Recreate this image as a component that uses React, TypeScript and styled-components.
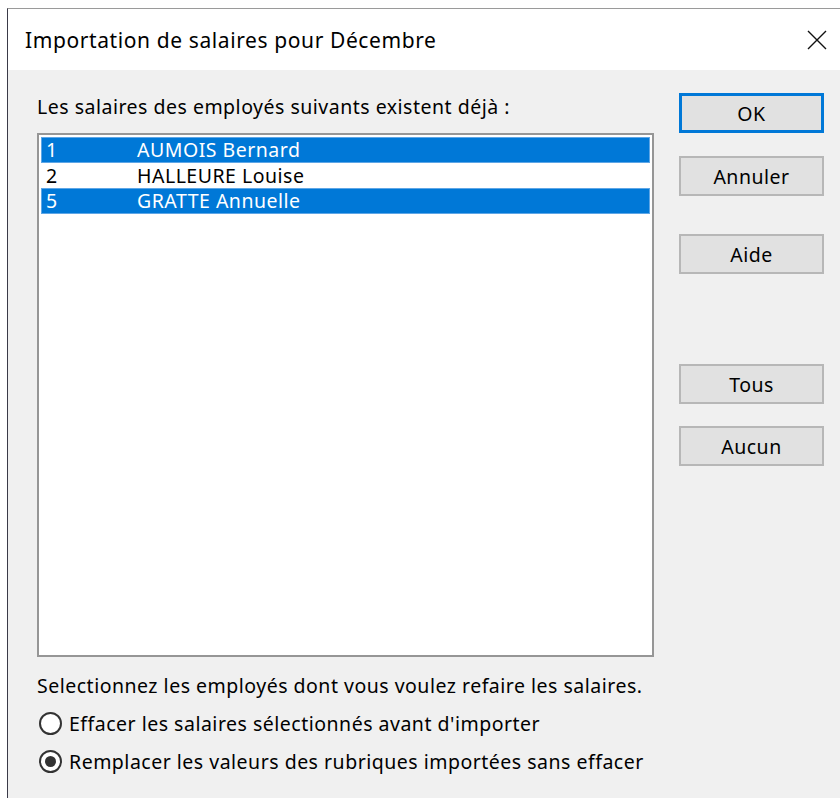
import React, { useState } from 'react';
import styled, { createGlobalStyle } from 'styled-components';

const GlobalStyle = createGlobalStyle`
  html, body {
    margin: 0;
    padding: 0;
    background: #ffffff;
  }
  body {
    font-family: "Noto Sans", "Open Sans", sans-serif;
    color: #000;
  }
  * {
    box-sizing: border-box;
  }
`;

const Desktop = styled.div`
  width: 840px;
  height: 798px;
  overflow: hidden;
  padding: 8px 0 0 7px;
  background: #ffffff;
`;

const Window = styled.div`
  height: 100%;
  border-left: 1px solid #3a3a48;
  border-top: 1px solid #9a9a9a;
  background: #f0f0f0;
  display: flex;
  flex-direction: column;
`;

const TitleBar = styled.div`
  height: 61px;
  flex: none;
  background: #ffffff;
  display: flex;
  align-items: center;
  justify-content: space-between;
  padding: 0 12px 0 17px;
`;

const Title = styled.span`
  font-size: 21px;
  letter-spacing: 0.6px;
  line-height: 26px;
`;

const CloseButton = styled.button`
  width: 22px;
  height: 22px;
  padding: 0;
  border: none;
  background: none;
  display: flex;
  align-items: center;
  justify-content: center;
  cursor: pointer;
`;

const Body = styled.div`
  flex: 1;
  display: grid;
  grid-template-columns: 617px 145px;
  column-gap: 25px;
  padding: 0 0 0 29px;
  font-size: 19.5px;
  letter-spacing: 0.5px;
`;

const Column = styled.div`
  display: flex;
  flex-direction: column;
`;

const Label = styled.div<{ top: number }>`
  margin-top: ${p => p.top}px;
  line-height: 24px;
  white-space: nowrap;
`;

const ListBox = styled.div`
  margin-top: 14px;
  height: 524px;
  border: 2px solid #969696;
  background: #ffffff;
  padding: 2px;
`;

const Row = styled.div<{ selected: boolean }>`
  height: 25.5px;
  display: flex;
  align-items: center;
  background: ${p => (p.selected ? '#0078d7' : 'transparent')};
  color: ${p => (p.selected ? '#ffffff' : '#000000')};
  box-shadow: ${p => (p.selected ? 'inset 0 0 0 1px #5ea6e6' : 'none')};
  cursor: default;
`;

const RowNumber = styled.span`
  width: 96px;
  padding-left: 5px;
`;

const RadioRow = styled.label<{ top: number }>`
  margin-top: ${p => p.top}px;
  display: flex;
  align-items: center;
  height: 26px;
  padding-left: 2px;
  white-space: nowrap;
  cursor: default;
`;

const RadioMark = styled.span<{ checked: boolean }>`
  flex: none;
  width: 23px;
  height: 23px;
  border-radius: 50%;
  border: 2px solid #333333;
  background: #ffffff;
  margin-right: 7px;
  display: flex;
  align-items: center;
  justify-content: center;

  &::after {
    content: '';
    width: 11px;
    height: 11px;
    border-radius: 50%;
    background: #333333;
    display: ${p => (p.checked ? 'block' : 'none')};
  }
`;

const Button = styled.button<{ top: number; isDefault?: boolean }>`
  margin-top: ${p => p.top}px;
  width: 145px;
  height: 40px;
  background: #e1e1e1;
  border: ${p => (p.isDefault ? '3px solid #0078d7' : '2px solid #b7b7b7')};
  font-family: inherit;
  font-size: 19.5px;
  letter-spacing: 0.5px;
  color: #000;
  padding: 0;
  cursor: default;
`;

const employees = [
  { id: 1, name: 'AUMOIS Bernard' },
  { id: 2, name: 'HALLEURE Louise' },
  { id: 5, name: 'GRATTE Annuelle' },
];

const options = [
  "Effacer les salaires sélectionnés avant d'importer",
  'Remplacer les valeurs des rubriques importées sans effacer',
];

export default function App() {
  const [selected, setSelected] = useState<number[]>([1, 5]);
  const [mode, setMode] = useState(1);

  const toggle = (id: number) =>
    setSelected(s => (s.includes(id) ? s.filter(x => x !== id) : [...s, id]));

  return (
    <>
      <GlobalStyle />
      <Desktop>
        <Window>
          <TitleBar>
            <Title>Importation de salaires pour Décembre</Title>
            <CloseButton aria-label="Fermer">
              <svg width="20" height="20" viewBox="0 0 20 20">
                <path d="M1 1 L19 19 M19 1 L1 19" stroke="#111" strokeWidth="1.4" />
              </svg>
            </CloseButton>
          </TitleBar>
          <Body>
            <Column>
              <Label top={25}>Les salaires des employés suivants existent déjà :</Label>
              <ListBox>
                {employees.map(e => (
                  <Row key={e.id} selected={selected.includes(e.id)} onClick={() => toggle(e.id)}>
                    <RowNumber>{e.id}</RowNumber>
                    <span>{e.name}</span>
                  </Row>
                ))}
              </ListBox>
              <Label top={17}>Selectionnez les employés dont vous voulez refaire les salaires.</Label>
              <RadioRow top={12} onClick={() => setMode(0)}>
                <RadioMark checked={mode === 0} />
                {options[0]}
              </RadioRow>
              <RadioRow top={12} onClick={() => setMode(1)}>
                <RadioMark checked={mode === 1} />
                {options[1]}
              </RadioRow>
            </Column>
            <Column>
              <Button top={23} isDefault>OK</Button>
              <Button top={23}>Annuler</Button>
              <Button top={38}>Aide</Button>
              <Button top={90}>Tous</Button>
              <Button top={22}>Aucun</Button>
            </Column>
          </Body>
        </Window>
      </Desktop>
    </>
  );
}
